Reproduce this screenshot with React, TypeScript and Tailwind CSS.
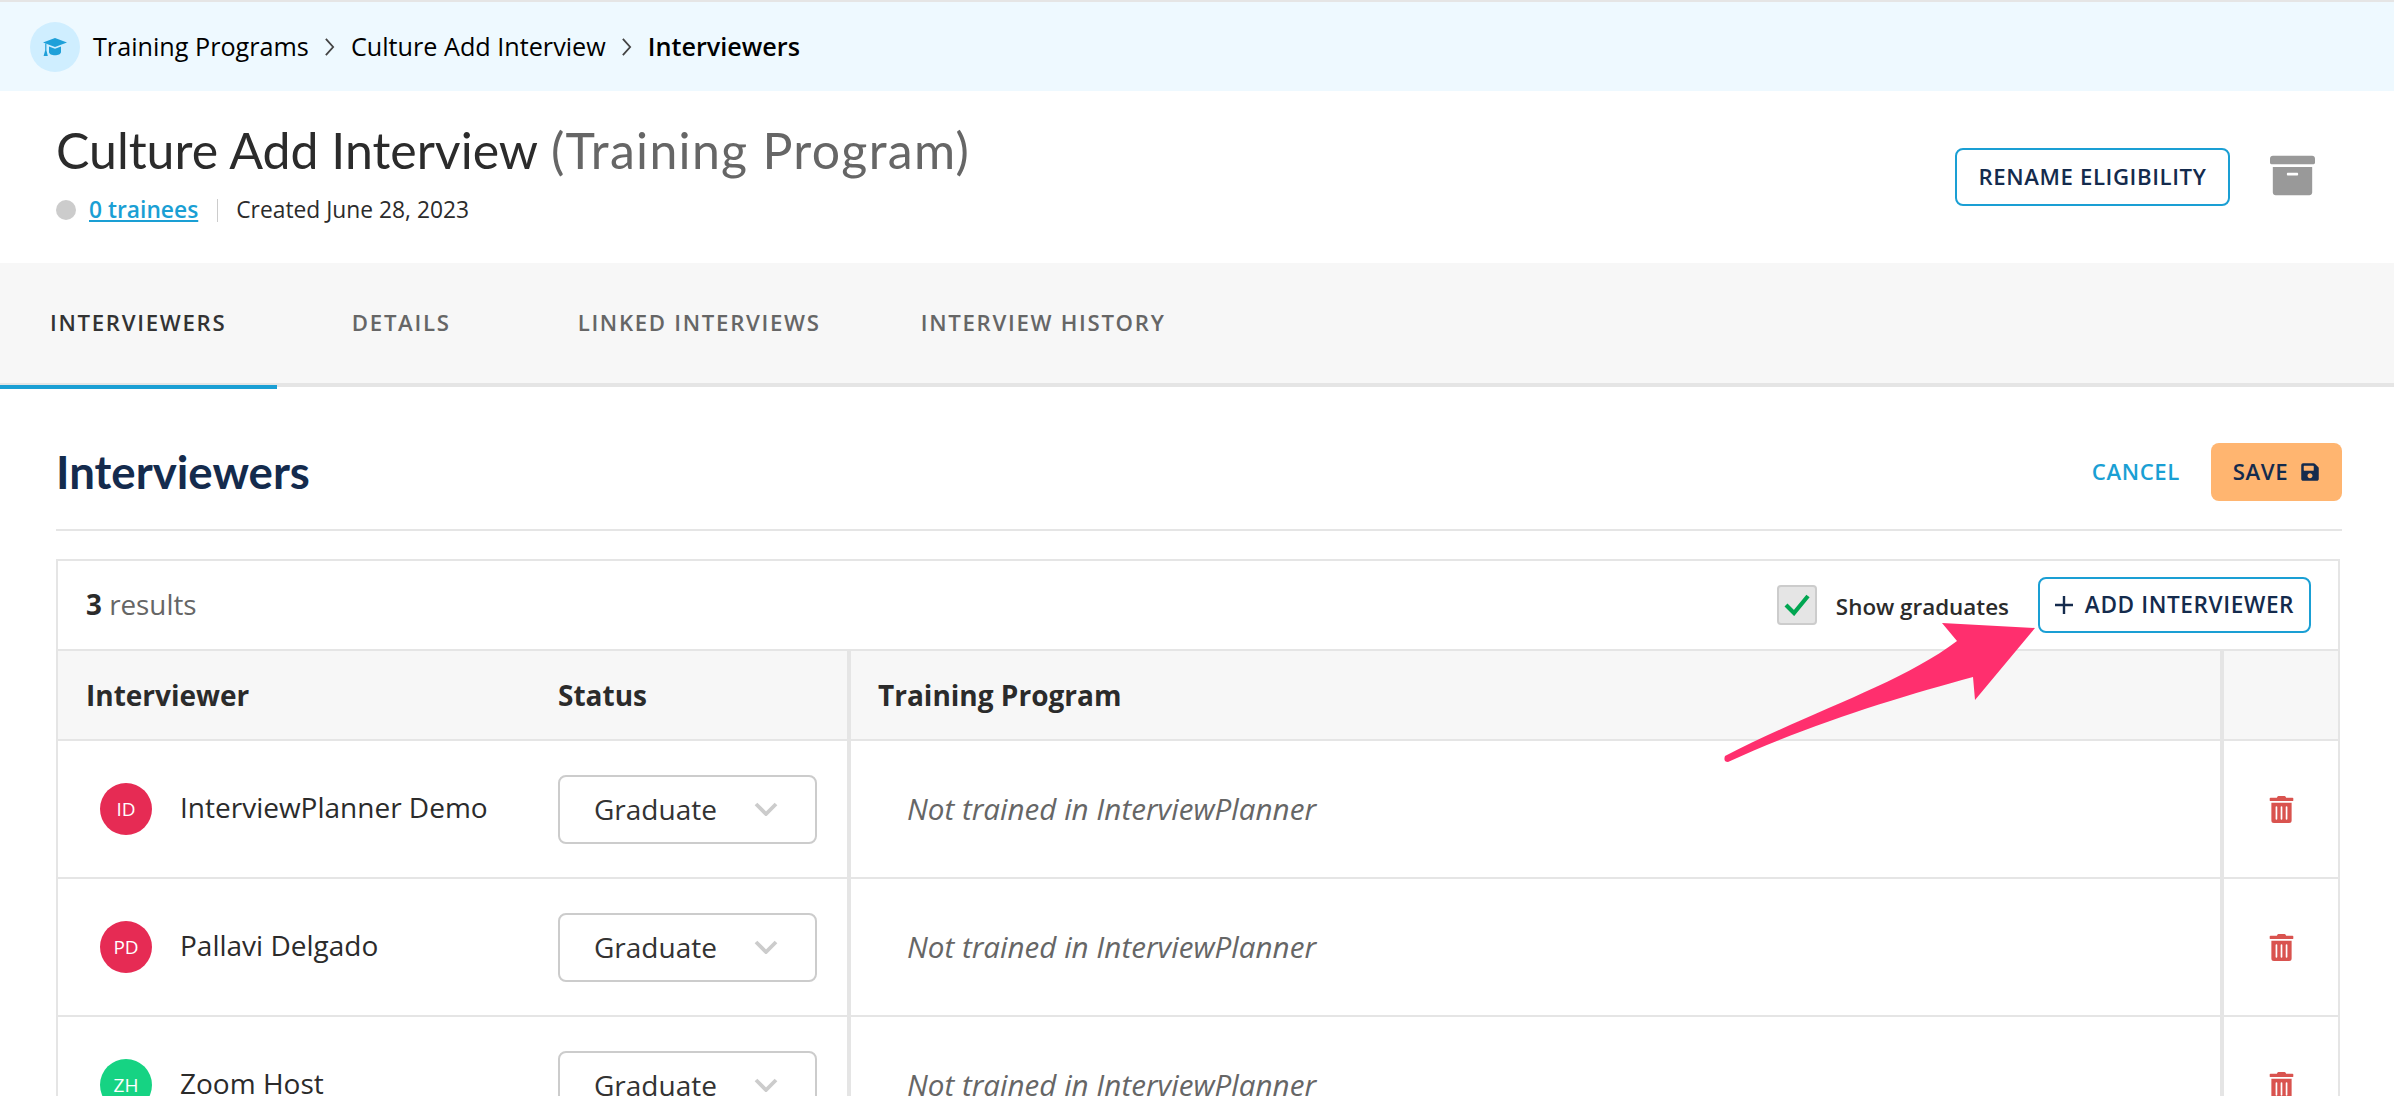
import { FaArchive, FaSave, FaTrashAlt } from "react-icons/fa";

const interviewers = [
  { initials: "ID", name: "InterviewPlanner Demo", color: "bg-[#e62b54]" },
  { initials: "PD", name: "Pallavi Delgado", color: "bg-[#e62b54]" },
  { initials: "ZH", name: "Zoom Host", color: "bg-[#16d383]" },
];

function Chevron() {
  return (
    <svg viewBox="0 0 24 14" className="h-[14px] w-[24px]" fill="none">
      <path d="M2 2l10 10L22 2" stroke="#cccccc" strokeWidth="3.8" />
    </svg>
  );
}

function Crumb() {
  return (
    <span className="mx-[15.5px] text-[#444]">
      <svg viewBox="0 0 12 22" className="h-[20px] w-[11px]" fill="none">
        <path d="M2 2l8 9-8 9" stroke="currentColor" strokeWidth="2" />
      </svg>
    </span>
  );
}

function Row({ initials, name, color }: (typeof interviewers)[number]) {
  return (
    <div className="grid h-[138px] grid-cols-[793px_1373px_1fr] border-b-2 border-[#e5e5e5]">
      <div className="flex items-center border-r-4 border-[#e5e5e5] pl-[42px]">
        <div
          className={`flex h-[52px] w-[52px] items-center justify-center rounded-full text-[19px] text-white ${color}`}
        >
          {initials}
        </div>
        <div className="mb-[4px] ml-[28px] w-[378px] text-[28px] text-[#2b2b2b]">
          {name}
        </div>
        <div className="flex h-[69px] w-[259px] items-center justify-between rounded-lg border-2 border-[#cccccc] pl-[34px] pr-[37px] text-[28px] text-[#333333]">
          Graduate
          <Chevron />
        </div>
      </div>
      <div className="flex items-center border-r-4 border-[#e5e5e5] pl-[56px] text-[29.6px] italic text-[#666666]">
        Not trained in InterviewPlanner
      </div>
      <div className="flex items-center justify-center">
        <FaTrashAlt className="text-[27px] text-[#d9534f]" />
      </div>
    </div>
  );
}

export default function App() {
  return (
    <div className="relative h-[1096px] overflow-hidden border-t-2 border-[#e5e5e5] bg-white font-['Open_Sans',sans-serif]">
      <div className="flex h-[89px] items-center bg-[#eef9ff] pl-[30px] text-[25.2px] text-black">
        <div className="flex h-[50px] w-[50px] items-center justify-center rounded-full bg-[#cfeeff]">
          <svg viewBox="0 0 26 20" className="w-[26px]" fill="#1ea0d9">
            <path d="M1 5.5L13 1l12 4.5L13 10z" />
            <path d="M7 9.5l6 2.3 6-2.3V15c0 2-3 3.3-6 3.3S7 17 7 15z" />
            <path d="M3.2 6.5h1.2v6.8l1.4 5.7H1.6l1.6-5.7z" />
          </svg>
        </div>
        <span className="ml-[13px]">Training Programs</span>
        <Crumb />
        <span>Culture Add Interview</span>
        <Crumb />
        <span className="font-semibold">Interviewers</span>
      </div>

      <div className="flex h-[172px] items-start justify-between pl-[56px] pr-[79px]">
        <div>
          <h1 className="mt-[29px] font-['Lato',sans-serif] text-[50px] leading-[60px] text-[#2b2b2b]">
            Culture Add Interview{" "}
            <span className="ml-[1px] tracking-[1.3px] text-[#666666]">
              (Training Program)
            </span>
          </h1>
          <div className="mt-[13px] flex items-center text-[22.8px] text-[#2b2b2b]">
            <span className="h-[20px] w-[20px] rounded-full bg-[#cccccc]" />
            <a className="ml-[13px] font-semibold text-[#1a9fd4] underline">
              0 trainees
            </a>
            <span className="mx-[18.5px] h-[23px] w-px bg-[#cccccc]" />
            <span>Created June 28, 2023</span>
          </div>
        </div>
        <div className="mt-[57px] flex items-start">
          <button className="h-[58px] w-[275px] rounded-lg border-2 border-[#1a9fd4] text-[22.2px] font-semibold tracking-[0.6px] text-[#142b4d]">
            RENAME ELIGIBILITY
          </button>
          <FaArchive className="ml-[40px] mt-[5px] text-[45px] text-[#999999]" />
        </div>
      </div>

      <div className="flex h-[124px] items-center border-b-4 border-[#e5e5e5] bg-[#f7f7f7] pb-[1px] text-[22.2px] font-semibold uppercase tracking-[1.7px] text-[#666666]">
        <div className="absolute left-0 top-[383px] h-[4px] w-[277px] bg-[#1a9fd4]" />
        <span className="ml-[50px] text-[#333333]">Interviewers</span>
        <span className="ml-[125.5px]">Details</span>
        <span className="ml-[127px]">Linked Interviews</span>
        <span className="ml-[100px]">Interview History</span>
      </div>

      <div className="pl-[56px] pr-[52px]">
        <div className="flex h-[144px] items-center justify-between border-b-2 border-[#e5e5e5] pt-[28px]">
          <h2 className="font-['Lato',sans-serif] text-[45.6px] font-bold text-[#142b4d]">
            Interviewers
          </h2>
          <div className="flex items-center">
            <span className="text-[22.2px] font-semibold tracking-[0.6px] text-[#1a9fd4]">
              CANCEL
            </span>
            <button className="ml-[31px] flex h-[58px] w-[131px] items-center justify-center gap-[12px] rounded-lg bg-[#ffb570] text-[22.2px] font-semibold tracking-[0.6px] text-[#142b4d]">
              SAVE
              <FaSave className="text-[20px]" />
            </button>
          </div>
        </div>

        <div className="mr-[2px] mt-[28px] border-x-2 border-t-2 border-[#e5e5e5]">
          <div className="flex h-[90px] items-center justify-between border-b-2 border-[#e5e5e5] pl-[28px] pr-[27px]">
            <span className="text-[27.8px] text-[#666666]">
              <b className="font-bold text-[#2b2b2b]">3</b> results
            </span>
            <div className="flex items-center">
              <div className="flex h-[40px] w-[40px] items-center justify-center rounded-sm border-2 border-[#cccccc] bg-[#e5e5e5]">
                <svg viewBox="0 0 26 22" className="w-[26px]" fill="none">
                  <path d="M2 11l8 8L24 2" stroke="#00a651" strokeWidth="4.2" />
                </svg>
              </div>
              <span className="ml-[19px] mt-[3px] text-[22.4px] font-semibold text-[#2b2b2b]">
                Show graduates
              </span>
              <button className="ml-[29px] flex h-[56px] w-[273px] items-center justify-center gap-[12px] rounded-lg border-2 border-[#1a9fd4] text-[22.6px] font-semibold tracking-[0.6px] text-[#142b4d]">
                <svg viewBox="0 0 18 18" className="w-[18px]" fill="none">
                  <path d="M9 0v18M0 9h18" stroke="currentColor" strokeWidth="2.4" />
                </svg>
                ADD INTERVIEWER
              </button>
            </div>
          </div>

          <div className="grid h-[90px] grid-cols-[793px_1373px_1fr] border-b-2 border-[#e5e5e5] bg-[#f7f7f7] text-[28px] font-bold text-[#2b2b2b]">
            <div className="flex items-center border-r-4 border-[#e5e5e5] pl-[28px]">
              <span className="w-[472px]">Interviewer</span>
              <span>Status</span>
            </div>
            <div className="flex items-center border-r-4 border-[#e5e5e5] pl-[27px]">
              Training Program
            </div>
            <div />
          </div>

          {interviewers.map((person) => (
            <Row key={person.initials} {...person} />
          ))}
        </div>
      </div>

      <svg
        className="absolute left-0 top-0 h-[1096px] w-[2394px]"
        viewBox="0 0 2394 1096"
      >
        <path
          d="M2035 626L1942 621L1957 639C1900 682 1810 710 1725 754Q1723 760 1728 760C1810 722 1900 695 1973 675L1975 698Z"
          fill="#ff2f6e"
        />
      </svg>
    </div>
  );
}
